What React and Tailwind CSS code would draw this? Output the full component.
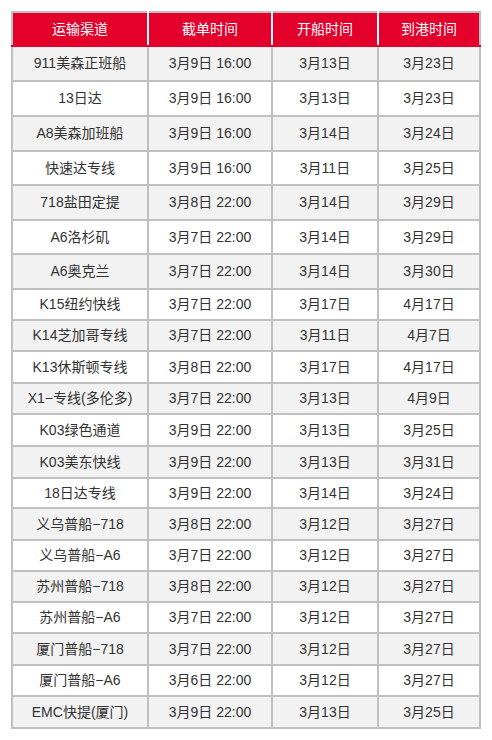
import React from "react";

const rows = [
  ["911美森正班船", "3月9日 16:00", "3月13日", "3月23日"],
  ["13日达", "3月9日 16:00", "3月13日", "3月23日"],
  ["A8美森加班船", "3月9日 16:00", "3月14日", "3月24日"],
  ["快速达专线", "3月9日 16:00", "3月11日", "3月25日"],
  ["718盐田定提", "3月8日 22:00", "3月14日", "3月29日"],
  ["A6洛杉矶", "3月7日 22:00", "3月14日", "3月29日"],
  ["A6奥克兰", "3月7日 22:00", "3月14日", "3月30日"],
  ["K15纽约快线", "3月7日 22:00", "3月17日", "4月17日"],
  ["K14芝加哥专线", "3月7日 22:00", "3月11日", "4月7日"],
  ["K13休斯顿专线", "3月8日 22:00", "3月17日", "4月17日"],
  ["X1−专线(多伦多)", "3月7日 22:00", "3月13日", "4月9日"],
  ["K03绿色通道", "3月9日 22:00", "3月13日", "3月25日"],
  ["K03美东快线", "3月9日 22:00", "3月13日", "3月31日"],
  ["18日达专线", "3月9日 22:00", "3月14日", "3月24日"],
  ["义乌普船−718", "3月8日 22:00", "3月12日", "3月27日"],
  ["义乌普船−A6", "3月7日 22:00", "3月12日", "3月27日"],
  ["苏州普船−718", "3月8日 22:00", "3月12日", "3月27日"],
  ["苏州普船−A6", "3月7日 22:00", "3月12日", "3月27日"],
  ["厦门普船−718", "3月7日 22:00", "3月12日", "3月27日"],
  ["厦门普船−A6", "3月6日 22:00", "3月12日", "3月27日"],
  ["EMC快提(厦门)", "3月9日 22:00", "3月13日", "3月25日"],
];

// row heights measured off the screenshot (first rows are taller)
const heights = [35, 35, 35, 34, 35, 34, 35, 31, 31, 32, 31, 32, 32, 30, 32, 31, 31, 31, 32, 31, 32];

const headers = ["运输渠道", "截单时间", "开船时间", "到港时间"];

export default function App() {
  return (
    <div
      className="bg-white min-h-screen pt-[11px] pl-[11px]"
      style={{ fontFamily: '"Liberation Sans", Arial, "Noto Sans CJK SC", sans-serif' }}
    >
      <table className="border-collapse table-fixed w-[470px] text-[14px] text-[#333]">
        <colgroup>
          <col className="w-[136px]" />
          <col className="w-[124px]" />
          <col className="w-[106px]" />
          <col className="w-[102px]" />
        </colgroup>
        <thead>
          <tr className="h-[34px]">
            {headers.map((h, i) => (
              <th
                key={h}
                className={`border-2 border-white border-t-[#c0c0c0] border-b-[#e3002b] bg-[#e3002b] text-white font-normal text-center align-middle p-0 ${
                  i === 0 ? "border-l-[#c0c0c0]" : ""
                } ${i === 3 ? "border-r-[#c0c0c0]" : ""}`}
              >
                {h}
              </th>
            ))}
          </tr>
        </thead>
        <tbody>
          {rows.map((r, idx) => (
            <tr
              key={idx}
              className={idx % 2 === 0 ? "bg-[#f2f2f2]" : "bg-white"}
              style={{ height: heights[idx] }}
            >
              {r.map((c, j) => (
                <td key={j} className="border-2 border-[#c0c0c0] text-center align-middle p-0 whitespace-nowrap">
                  {c}
                </td>
              ))}
            </tr>
          ))}
        </tbody>
      </table>
    </div>
  );
}
